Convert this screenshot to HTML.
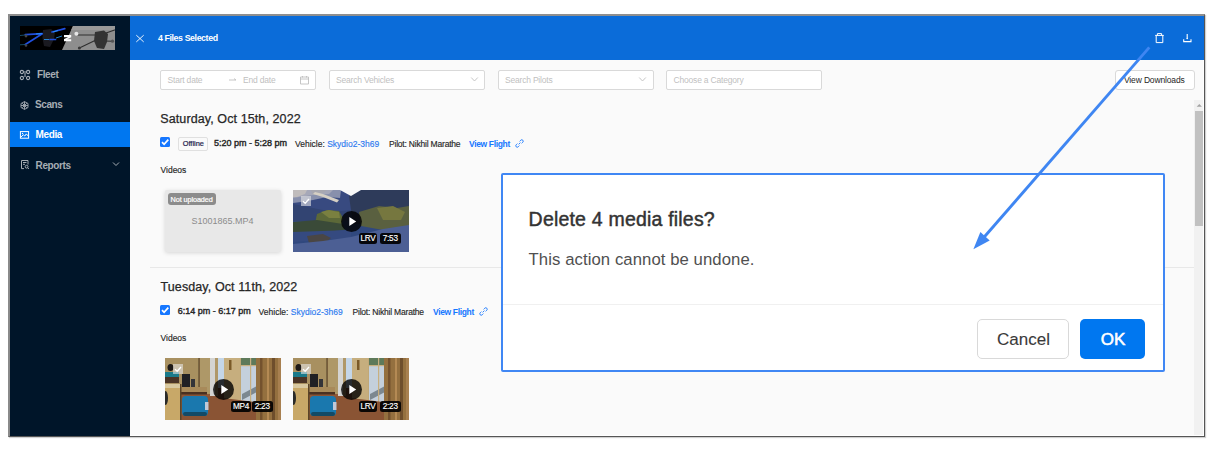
<!DOCTYPE html>
<html><head><meta charset="utf-8">
<style>
*{margin:0;padding:0;box-sizing:border-box}
html,body{width:1213px;height:461px;background:#fff;overflow:hidden;font-family:"Liberation Sans",sans-serif}
.a{position:absolute}
.t{position:absolute;white-space:nowrap;line-height:1}
#frame{left:8px;top:14px;width:1197px;height:423px;border-style:solid;border-width:2px 1px 1px 2px;border-color:#8e8e8e #555 #555 #8a8a8a;background:#fff;overflow:hidden;box-shadow:1px 1px 1px rgba(0,0,0,0.18)}
#content{left:130px;top:60px;width:1073px;height:375px;background:#fafafa}
#side{left:10px;top:16px;width:120px;height:420px;background:#001529}
#head{left:130px;top:16px;width:1074px;height:44px;background:#0b6cd9}
.menu{color:#a6adb4;font-size:10px;font-weight:bold;letter-spacing:-0.4px}
.box{position:absolute;background:#fff;border:1px solid #d9d9d9;border-radius:2px}
.ph{color:#bfbfbf;font-size:8.5px;letter-spacing:-0.2px}
.tit{color:#262626;font-size:12.5px;letter-spacing:0.1px;-webkit-text-stroke:0.25px #262626}
.meta{font-size:8.5px;color:#262626;-webkit-text-stroke:0.15px #262626}
.blue{color:#2f7bf0;-webkit-text-stroke:0.15px #2f7bf0}
.vf{color:#1677ff;font-weight:bold;letter-spacing:-0.35px;-webkit-text-stroke:0 #1677ff}
.cb{position:absolute;width:10px;height:10px;background:#1677ff;border-radius:1.5px}
.badge{position:absolute;background:rgba(0,0,0,0.92);border-radius:2.5px;color:#fff;font-size:8.2px;line-height:11.5px;height:11.5px;text-align:center;letter-spacing:-0.2px;-webkit-text-stroke:0.15px #fff}
.play{position:absolute;width:21px;height:21px;border-radius:50%;background:rgba(0,0,0,0.8)}
</style></head>
<body>
<div id="frame" class="a"></div>
<div id="content" class="a"></div>
<div id="side" class="a"></div>
<div id="head" class="a"></div>

<!-- logo -->
<svg class="a" style="left:20px;top:26px" width="95" height="24" viewBox="0 0 95 24">
  <rect width="95" height="24" fill="#000"/>
  <polygon points="42,24 53,0 95,0 95,24" fill="#8e8e8e"/>
  <polygon points="53,0 95,0 95,4 51.2,4" fill="#999"/>
  <path d="M23,4 L31,3 L35,6 L34,13 L30,21 L24,20 L22.5,12 Z" fill="#1a1a20"/>
  <g stroke="#2050e0" stroke-width="1.7" fill="none" stroke-linecap="round" stroke-linejoin="round">
    <path d="M5.3,8.6 L22.3,7.7 L5.3,18.5"/>
    <path d="M32,6 L44.8,2.6"/>
    <path d="M30,13.5 L35.5,13.5"/>
  </g>
  <g stroke="#2aa0ff" stroke-width="0.8" fill="none">
    <path d="M16,8 L22,7.6"/><path d="M24,13.5 L29,13.5"/><path d="M36,12 L42,10"/><path d="M33,6 L38,4.5"/><path d="M0,9.5 L5,9" stroke="#1a6080"/><path d="M0,18.8 L5,18.5" stroke="#1a6080"/>
  </g>
  <circle cx="6" cy="10" r="1.4" fill="#444"/><circle cx="6" cy="19.5" r="1.3" fill="#444"/>
  <path d="M44,8.9 H51.2 V11.2 L47,13.2 H51.2 V15.3 H44 V13 L48.2,11.2 H44 Z" fill="#fff"/>
  <g stroke="#2e2e2e" stroke-width="1.1" fill="none" stroke-linecap="round">
    <path d="M58,9 L77,9"/>
    <path d="M59.4,21.9 L76,14"/>
    <path d="M84,15 L93.4,15.2"/>
    <path d="M86,7 L94.6,4"/>
  </g>
  <path d="M75,6 L84,4.5 L88,8 L87,16 L84,23 L77,22 L74,15 Z" fill="#333"/>
  <circle cx="56.4" cy="7.7" r="2" fill="#e6e6e6"/>
  <circle cx="59.4" cy="21.9" r="1.5" fill="#3a3a3a"/><circle cx="92.5" cy="15.2" r="1.6" fill="#555"/>
</svg>

<!-- sidebar menu -->
<div class="a" style="left:10px;top:122px;width:120px;height:25px;background:#0077f0"></div>
<svg class="a" style="left:19px;top:69px" width="12" height="12" viewBox="0 0 12 12" fill="none" stroke="#a6adb4" stroke-width="1.1">
<circle cx="2.9" cy="3" r="1.6"/><circle cx="9.1" cy="3" r="1.6"/><circle cx="2.9" cy="9" r="1.6"/><circle cx="9.1" cy="9" r="1.6"/><path d="M4.5,3 H7.5 M6,4 V8"/></svg>
<svg class="a" style="left:19px;top:100px" width="11" height="11" viewBox="0 0 11 11" fill="none" stroke="#a6adb4" stroke-width="1">
<path d="M5.5,1.6 L9,3.5 V7.5 L5.5,9.4 L2,7.5 V3.5 Z M2,5.5 H9 M5.5,1.6 V9.4 M3.2,3.2 L7.8,7.8 M7.8,3.2 L3.2,7.8" stroke-width="0.9"/></svg>
<svg class="a" style="left:19px;top:130px" width="11" height="10" viewBox="0 0 11 10" fill="none" stroke="#fff" stroke-width="1">
<rect x="1.4" y="1.6" width="8.2" height="6.6"/><path d="M1.8,7.2 L4.3,4.8 L5.8,6 L7.3,3.9 L9.4,6.2"/><circle cx="3.5" cy="3.5" r="0.7" fill="#fff" stroke="none"/></svg>
<svg class="a" style="left:20px;top:159px" width="10" height="11" viewBox="0 0 10 11" fill="none" stroke="#a6adb4" stroke-width="1">
<path d="M4,9.6 H1.5 V1.5 H8 V5.5 M3,3.5 H6.5 M3,5.3 H5"/><circle cx="6.6" cy="7.7" r="1.4"/><path d="M7.6,8.7 L8.9,10"/></svg>
<svg class="a" style="left:112px;top:161px" width="8" height="6" viewBox="0 0 8 6"><path d="M1,1.5 L4,4.5 L7,1.5" stroke="#a6adb4" stroke-width="1" fill="none"/></svg>
<div class="t menu" style="left:37px;top:69.5px">Fleet</div>
<div class="t menu" style="left:35px;top:99.5px">Scans</div>
<div class="t menu" style="left:35.6px;top:129.5px;color:#fff">Media</div>
<div class="t menu" style="left:35.6px;top:160.5px">Reports</div>

<!-- header -->
<svg class="a" style="left:135px;top:34px" width="10" height="9" viewBox="0 0 10 9"><path d="M1.3,1.2 L8.7,7.9 M8.7,1.2 L1.3,7.9" stroke="#fff" stroke-width="0.9" fill="none"/></svg>
<svg class="a" style="left:1154px;top:32px" width="11" height="12" viewBox="0 0 11 12"><path d="M1.2,3.4 H9.8 M3.4,3.4 V1.6 H7.6 V3.4 M2.2,3.4 V10.6 H8.8 V3.4" stroke="#fff" stroke-width="1" fill="none"/></svg>
<svg class="a" style="left:1182px;top:32px" width="11" height="11" viewBox="0 0 11 11"><path d="M5.2,2 V6.6 M1.7,7.2 V9.6 H9 V7.2" stroke="#fff" stroke-width="1.1" fill="none"/><circle cx="5.2" cy="6.5" r="0.8" fill="#fff"/></svg>
<div class="t" style="left:158px;top:33.7px;font-size:8.8px;font-weight:bold;color:#fff;letter-spacing:-0.4px">4 Files Selected</div>

<!-- filters -->
<div class="box" style="left:160px;top:70px;width:156px;height:20px"></div>
<div class="t ph" style="left:167.5px;top:75.5px">Start date</div>
<div class="t ph" style="left:243px;top:75.5px">End date</div>
<svg class="a" style="left:228px;top:77px" width="10" height="6"><path d="M1,3 H8 M6,1.6 L8,3" stroke="#bfbfbf" stroke-width="0.9" fill="none"/></svg>
<svg class="a" style="left:299px;top:75px" width="11" height="10" viewBox="0 0 11 10"><path d="M1.5,2 H9.5 V9 H1.5 Z M1.5,4 H9.5 M3.5,1 V2.5 M7.5,1 V2.5" stroke="#bfbfbf" stroke-width="0.9" fill="none"/></svg>
<div class="box" style="left:329px;top:70px;width:156px;height:20px"></div>
<div class="t ph" style="left:336px;top:75.5px">Search Vehicles</div>
<svg class="a" style="left:470px;top:76px" width="9" height="7"><path d="M1.2,1.5 L4.5,5 L7.8,1.5" stroke="#bfbfbf" stroke-width="0.9" fill="none"/></svg>
<div class="box" style="left:498px;top:70px;width:156px;height:20px"></div>
<div class="t ph" style="left:505px;top:75.5px">Search Pilots</div>
<svg class="a" style="left:638px;top:76px" width="9" height="7"><path d="M1.2,1.5 L4.5,5 L7.8,1.5" stroke="#bfbfbf" stroke-width="0.9" fill="none"/></svg>
<div class="box" style="left:666px;top:70px;width:156px;height:20px"></div>
<div class="t ph" style="left:673.6px;top:75.5px">Choose a Category</div>
<div class="box" style="left:1114.5px;top:70px;width:80px;height:19.5px;border-radius:3px"></div>
<div class="t" style="left:1124px;top:75.5px;font-size:8.5px;color:#262626;letter-spacing:-0.15px">View Downloads</div>

<!-- scrollbar -->
<div class="a" style="left:1194px;top:100px;width:9px;height:335px;background:#f1f1f1"></div>
<div class="a" style="left:1195px;top:111px;width:8px;height:115px;background:#c1c1c1"></div>
<svg class="a" style="left:1194px;top:100px" width="9" height="11"><polygon points="5.3,3.9 7.9,6.8 2.7,6.8" fill="#a3a3a3"/></svg>

<!-- section 1 -->
<div class="t tit" style="left:160.3px;top:113px">Saturday, Oct 15th, 2022</div>
<div class="cb" style="left:160px;top:137px"><svg class="a" style="left:0;top:0" width="10" height="10"><path d="M2,5.2 L4.1,7.3 L8.3,2.6" stroke="#fff" stroke-width="1.7" fill="none"/></svg></div>
<div class="box" style="left:178px;top:137px;width:30px;height:13.5px;background:#fafafa;border-color:#e0e0e0"></div>
<div class="t" style="left:182.7px;top:140.3px;font-size:7.4px;color:#20204a;-webkit-text-stroke:0.2px #20204a">Offline</div>
<div class="t meta" style="left:214px;top:139.2px;font-size:9px;-webkit-text-stroke:0.4px #262626">5:20 pm - 5:28 pm</div>
<div class="t meta" style="left:295px;top:140px">Vehicle: <span class="blue">Skydio2-3h69</span></div>
<div class="t meta" style="left:389px;top:140px;letter-spacing:-0.2px">Pilot: Nikhil Marathe</div>
<div class="t meta vf" style="left:469px;top:140px">View Flight</div>
<svg class="a" style="left:514.5px;top:139px" width="9" height="9" viewBox="0 0 9 9"><path d="M3.6,5.4 L5.4,3.6 M4.6,2.4 L5.8,1.2 A1.3,1.3 0 0 1 7.8,3.2 L6.6,4.4 M4.4,6.6 L3.2,7.8 A1.3,1.3 0 0 1 1.2,5.8 L2.4,4.6" stroke="#1677ff" stroke-width="0.9" fill="none"/></svg>
<div class="t meta" style="left:160.5px;top:165.5px">Videos</div>
<div class="a" style="left:165px;top:190px;width:116px;height:62px;background:#e8e8e8;border-radius:2px;box-shadow:0 1px 4px rgba(0,0,0,0.15)"></div>
<div class="a" style="left:168px;top:193px;width:48px;height:11.5px;background:#8c8c8c;border-radius:3px"></div>
<div class="t" style="left:170.5px;top:195.5px;font-size:7.3px;color:#fff;-webkit-text-stroke:0.2px #fff;letter-spacing:-0.1px">Not uploaded</div>
<div class="t" style="left:191.5px;top:217px;font-size:9px;color:#8c8c8c">S1001865.MP4</div>
<svg class="a" style="left:293px;top:190px" width="116" height="62" viewBox="0 0 116 62">
  <rect width="116" height="62" fill="#30487e"/>
  <polygon points="0,0 58,0 58,31 0,31" fill="#384a80"/>
  <polygon points="0,14 20,18 40,22 58,20 58,31 0,31" fill="#324472"/>
  <polygon points="56,6 68,0 116,0 116,34 60,34" fill="#2e3b5a"/>
  <polygon points="0,0 48,0 47,8 34,7 20,10 8,12 0,13" fill="#8890ac"/>
  <polygon points="0,0 40,0 36,4 20,5 6,7 0,8" fill="#a6a8b8"/>
  <polygon points="0,0 14,0 12,4 4,7 0,7" fill="#c0bcbc"/>
  <polygon points="18,0 34,0 30,3 20,5" fill="#a8a8b0"/>
  <polygon points="22,2 30,4 46,10 44,12.5 30,7 20,4" fill="#d6d0c4"/>
  <polygon points="47,0 68,0 58,6" fill="#f8f8f8"/>
  <polygon points="24,24 34,20 46,21 50,28 48,38 30,40 22,34" fill="#5c6838"/>
  <polygon points="28,22 36,20 46,22 47,28 36,28" fill="#7a8040"/>
  <polygon points="0,32 24,30 50,34 52,40 30,42 0,42" fill="#3a4a38"/>
  <polygon points="66,22 86,16 104,18 116,16 116,38 90,40 68,36" fill="#5a6040"/>
  <polygon points="84,18 100,16 112,22 108,30 90,30" fill="#76773f"/>
  <polygon points="0,42 58,40 58,48 0,52" fill="#354a80"/>
  <polygon points="14,46 30,44 38,48 32,53 16,53" fill="#4a4644"/>
  <polygon points="0,62 0,54 30,51 58,47 90,39 116,35 116,62" fill="#4c5f94"/>
</svg>
<div class="a" style="left:301px;top:196px;width:10px;height:10px;background:rgba(230,230,230,0.6)"></div>
<svg class="a" style="left:301px;top:196px" width="10" height="10"><path d="M2,5.2 L4.2,7.3 L8,3" stroke="#fff" stroke-width="1.3" fill="none"/></svg>
<div class="play" style="left:340.5px;top:210.5px"></div>
<svg class="a" style="left:340.5px;top:210.5px" width="21" height="21"><polygon points="8.3,6 15.2,10.5 8.3,15" fill="#fff"/></svg>
<div class="badge" style="left:359px;top:232.5px;width:18px">LRV</div>
<div class="badge" style="left:380px;top:232.5px;width:20.5px">7:53</div>

<div class="a" style="left:150px;top:267px;width:1044px;height:1px;background:#e8e8e8"></div>

<!-- section 2 -->
<div class="t tit" style="left:160.5px;top:281px">Tuesday, Oct 11th, 2022</div>
<div class="cb" style="left:160px;top:305px"><svg class="a" style="left:0;top:0" width="10" height="10"><path d="M2,5.2 L4.1,7.3 L8.3,2.6" stroke="#fff" stroke-width="1.7" fill="none"/></svg></div>
<div class="t meta" style="left:177.8px;top:307.4px;font-size:9px;-webkit-text-stroke:0.4px #262626">6:14 pm - 6:17 pm</div>
<div class="t meta" style="left:258.6px;top:308px">Vehicle: <span class="blue">Skydio2-3h69</span></div>
<div class="t meta" style="left:352.5px;top:308px;letter-spacing:-0.2px">Pilot: Nikhil Marathe</div>
<div class="t meta vf" style="left:433px;top:308px">View Flight</div>
<svg class="a" style="left:478.5px;top:307px" width="9" height="9" viewBox="0 0 9 9"><path d="M3.6,5.4 L5.4,3.6 M4.6,2.4 L5.8,1.2 A1.3,1.3 0 0 1 7.8,3.2 L6.6,4.4 M4.4,6.6 L3.2,7.8 A1.3,1.3 0 0 1 1.2,5.8 L2.4,4.6" stroke="#1677ff" stroke-width="0.9" fill="none"/></svg>
<div class="t meta" style="left:160.5px;top:334px">Videos</div>
<svg class="a" style="left:165px;top:358px" width="116" height="62" viewBox="0 0 116 62">
  <rect width="116" height="62" fill="#8e5838"/>
  <rect x="0" y="0" width="34" height="32" fill="#a89060"/>
  <rect x="33.5" y="0" width="1.2" height="34" fill="#4a3a22"/>
  <rect x="34.7" y="0" width="10.3" height="36" fill="#ae9868"/>
  <rect x="45" y="0" width="5" height="38" fill="#d4d4d2"/>
  <rect x="50" y="0" width="3" height="38" fill="#b09868"/>
  <rect x="53" y="0" width="6" height="30" fill="#c4d6e8"/>
  <rect x="59" y="0" width="16" height="42" fill="#c6ae7e"/>
  <rect x="64" y="2" width="2.5" height="10" fill="#7a5a28"/>
  <rect x="75" y="0" width="20" height="46" fill="#c0a878"/>
  <rect x="76" y="0" width="17" height="44" fill="#c4d0dc"/>
  <rect x="76" y="0" width="17" height="7" fill="#5e7a5a"/>
  <polygon points="77,36 92,28 92,34 77,42" fill="#7c8890"/>
  <rect x="76" y="7" width="17" height="1.2" fill="#c8b080"/>
  <rect x="85" y="0" width="1.2" height="44" fill="#c8b080"/>
  <polygon points="20,36 58,40 90,44 92,62 16,62" fill="#8a5434"/>
  <rect x="91" y="0" width="25" height="62" fill="#94703f"/>
  <rect x="95" y="0" width="2.5" height="62" fill="#74522e"/>
  <rect x="102" y="0" width="2" height="62" fill="#b48a54"/>
  <rect x="107" y="0" width="3" height="62" fill="#6e4e2c"/>
  <rect x="113" y="0" width="3" height="62" fill="#a88050"/>
  <rect x="16" y="29" width="26" height="5" fill="#a88a5a"/>
  <rect x="16" y="34" width="26" height="2.5" fill="#4a3020"/>
  <rect x="17" y="16" width="8" height="13" fill="#202024"/>
  <rect x="26" y="21" width="4" height="8" fill="#343438"/>
  <rect x="0" y="14" width="14" height="6" fill="#1a7a8a"/>
  <rect x="0" y="19" width="14" height="6" fill="#4a3426"/>
  <ellipse cx="5.5" cy="9.5" rx="3" ry="3.6" fill="#1e1a18"/>
  <rect x="0" y="26" width="16" height="36" fill="#c8a868"/>
  <rect x="0" y="26" width="16" height="4" fill="#d8c8a0"/>
  <rect x="15" y="26" width="1.5" height="36" fill="#5a4428"/>
  <ellipse cx="0.5" cy="40" rx="2.5" ry="7" fill="#2a2a28"/>
  <rect x="17" y="38" width="26" height="20" rx="4" fill="#1a78ae"/>
  <rect x="18" y="54" width="24" height="4" rx="2" fill="#134a66"/>
  <rect x="40" y="44" width="3.5" height="8" fill="#c0c8d8"/>
</svg>
<div class="a" style="left:173px;top:364px;width:10px;height:10px;background:rgba(230,230,230,0.6)"></div>
<svg class="a" style="left:173px;top:364px" width="10" height="10"><path d="M2,5.2 L4.2,7.3 L8,3" stroke="#fff" stroke-width="1.3" fill="none"/></svg>
<div class="play" style="left:212.5px;top:378.5px"></div>
<svg class="a" style="left:212.5px;top:378.5px" width="21" height="21"><polygon points="8.3,6 15.2,10.5 8.3,15" fill="#fff"/></svg>
<div class="badge" style="left:231px;top:400.5px;width:20px">MP4</div>
<div class="badge" style="left:252px;top:400.5px;width:20.5px">2:23</div>
<svg class="a" style="left:293px;top:358px" width="116" height="62" viewBox="0 0 116 62">
  <rect width="116" height="62" fill="#8e5838"/>
  <rect x="0" y="0" width="34" height="32" fill="#a89060"/>
  <rect x="33.5" y="0" width="1.2" height="34" fill="#4a3a22"/>
  <rect x="34.7" y="0" width="10.3" height="36" fill="#ae9868"/>
  <rect x="45" y="0" width="5" height="38" fill="#d4d4d2"/>
  <rect x="50" y="0" width="3" height="38" fill="#b09868"/>
  <rect x="53" y="0" width="6" height="30" fill="#c4d6e8"/>
  <rect x="59" y="0" width="16" height="42" fill="#c6ae7e"/>
  <rect x="64" y="2" width="2.5" height="10" fill="#7a5a28"/>
  <rect x="75" y="0" width="20" height="46" fill="#c0a878"/>
  <rect x="76" y="0" width="17" height="44" fill="#c4d0dc"/>
  <rect x="76" y="0" width="17" height="7" fill="#5e7a5a"/>
  <polygon points="77,36 92,28 92,34 77,42" fill="#7c8890"/>
  <rect x="76" y="7" width="17" height="1.2" fill="#c8b080"/>
  <rect x="85" y="0" width="1.2" height="44" fill="#c8b080"/>
  <polygon points="20,36 58,40 90,44 92,62 16,62" fill="#8a5434"/>
  <rect x="91" y="0" width="25" height="62" fill="#94703f"/>
  <rect x="95" y="0" width="2.5" height="62" fill="#74522e"/>
  <rect x="102" y="0" width="2" height="62" fill="#b48a54"/>
  <rect x="107" y="0" width="3" height="62" fill="#6e4e2c"/>
  <rect x="113" y="0" width="3" height="62" fill="#a88050"/>
  <rect x="16" y="29" width="26" height="5" fill="#a88a5a"/>
  <rect x="16" y="34" width="26" height="2.5" fill="#4a3020"/>
  <rect x="17" y="16" width="8" height="13" fill="#202024"/>
  <rect x="26" y="21" width="4" height="8" fill="#343438"/>
  <rect x="0" y="14" width="14" height="6" fill="#1a7a8a"/>
  <rect x="0" y="19" width="14" height="6" fill="#4a3426"/>
  <ellipse cx="5.5" cy="9.5" rx="3" ry="3.6" fill="#1e1a18"/>
  <rect x="0" y="26" width="16" height="36" fill="#c8a868"/>
  <rect x="0" y="26" width="16" height="4" fill="#d8c8a0"/>
  <rect x="15" y="26" width="1.5" height="36" fill="#5a4428"/>
  <ellipse cx="0.5" cy="40" rx="2.5" ry="7" fill="#2a2a28"/>
  <rect x="17" y="38" width="26" height="20" rx="4" fill="#1a78ae"/>
  <rect x="18" y="54" width="24" height="4" rx="2" fill="#134a66"/>
  <rect x="40" y="44" width="3.5" height="8" fill="#c0c8d8"/>
</svg>
<div class="a" style="left:301px;top:364px;width:10px;height:10px;background:rgba(230,230,230,0.6)"></div>
<svg class="a" style="left:301px;top:364px" width="10" height="10"><path d="M2,5.2 L4.2,7.3 L8,3" stroke="#fff" stroke-width="1.3" fill="none"/></svg>
<div class="play" style="left:340.5px;top:378.5px"></div>
<svg class="a" style="left:340.5px;top:378.5px" width="21" height="21"><polygon points="8.3,6 15.2,10.5 8.3,15" fill="#fff"/></svg>
<div class="badge" style="left:359px;top:400.5px;width:18px">LRV</div>
<div class="badge" style="left:380px;top:400.5px;width:20.5px">2:23</div>

<!-- dialog -->
<div class="a" style="left:501px;top:173px;width:664px;height:199px;background:#fff;border:2.3px solid #4087f4;border-radius:2px"></div>
<div class="a" style="left:503px;top:304px;width:660px;height:1px;background:#f0f0f0"></div>
<div class="t" style="left:528.6px;top:210px;font-size:19.5px;color:#333;letter-spacing:0.2px;-webkit-text-stroke:0.45px #333">Delete 4 media files?</div>
<div class="t" style="left:528.6px;top:252px;font-size:16.7px;color:#505050;letter-spacing:0.08px">This action cannot be undone.</div>
<div class="a" style="left:976.5px;top:319px;width:92.8px;height:40.3px;border:1px solid #d9d9d9;border-radius:5px;background:#fff"></div>
<div class="t" style="left:997px;top:331px;font-size:17px;color:#3a3a3a;-webkit-text-stroke:0.1px #3a3a3a">Cancel</div>
<div class="a" style="left:1080px;top:319px;width:65px;height:40px;border-radius:5px;background:#0077f0"></div>
<div class="t" style="left:1100.8px;top:331px;font-size:17px;color:#fff;-webkit-text-stroke:0.55px #fff">OK</div>

<!-- arrow -->
<svg class="a" style="left:0;top:0" width="1213" height="461">
  <line x1="1149.3" y1="47.4" x2="982.5" y2="239" stroke="#3f86f2" stroke-width="2.9"/>
  <polygon points="973.4,249.2 980.4,231.9 989.7,240.4" fill="#3f86f2"/>
</svg>
</body></html>
